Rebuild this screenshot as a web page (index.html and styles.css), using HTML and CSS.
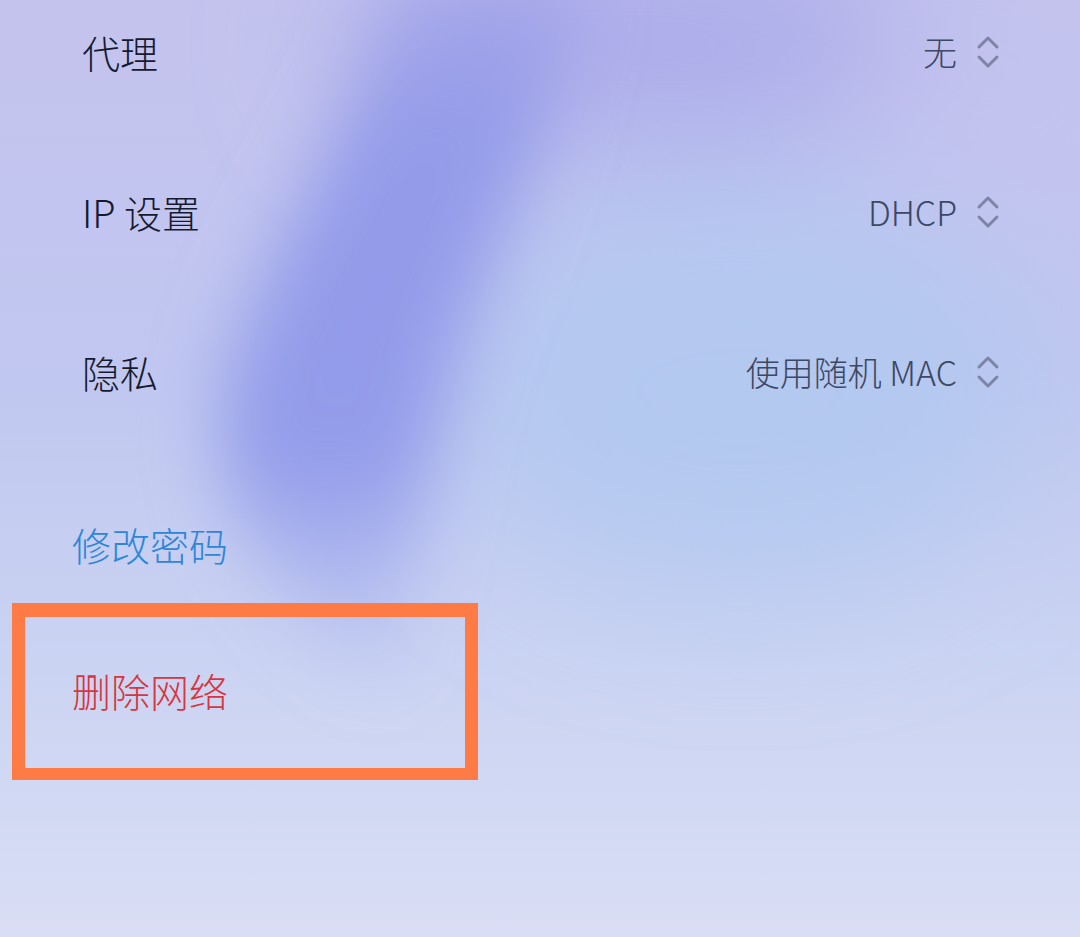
FILE: index.html
```html
<!DOCTYPE html>
<html lang="zh-CN">
<head>
<meta charset="utf-8">
<title>网络设置</title>
<link rel="stylesheet" href="styles.css">
</head>
<body>
<div class="page">
  <div class="settings">
    <div class="row">
      <span class="label">代理</span>
      <span class="value">无<svg class="updown" viewBox="0 0 24 36" width="24" height="36"><path d="M3 13 L12 4 L21 13 M3 23 L12 32 L21 23" fill="none" stroke="#7d84a8" stroke-width="3" stroke-linecap="round" stroke-linejoin="round"/></svg></span>
    </div>
    <div class="row">
      <span class="label">IP 设置</span>
      <span class="value">DHCP<svg class="updown" viewBox="0 0 24 36" width="24" height="36"><path d="M3 13 L12 4 L21 13 M3 23 L12 32 L21 23" fill="none" stroke="#7d84a8" stroke-width="3" stroke-linecap="round" stroke-linejoin="round"/></svg></span>
    </div>
    <div class="row">
      <span class="label">隐私</span>
      <span class="value">使用随机 MAC<svg class="updown" viewBox="0 0 24 36" width="24" height="36"><path d="M3 13 L12 4 L21 13 M3 23 L12 32 L21 23" fill="none" stroke="#7d84a8" stroke-width="3" stroke-linecap="round" stroke-linejoin="round"/></svg></span>
    </div>
  </div>
  <div class="actions">
    <div class="action action-blue">修改密码</div>
    <div class="highlight">
      <div class="action action-red">删除网络</div>
    </div>
  </div>
</div>
</body>
</html>
```

FILE: styles.css
```css
html, body {
  margin: 0;
  padding: 0;
}
body {
  width: 1080px;
  height: 937px;
  overflow: hidden;
  font-family: "Noto Sans CJK SC", "Noto Sans", sans-serif;
  background-color: #c8cdf0;
  background-repeat: no-repeat;
  background-image: url("data:image/svg+xml;utf8,<svg xmlns='http://www.w3.org/2000/svg' width='1080' height='937' viewBox='0 0 1080 937'><defs><linearGradient id='g' x1='0' y1='0' x2='0' y2='1'><stop offset='0' stop-color='%23c4c3ee'/><stop offset='0.4' stop-color='%23c0c7f0'/><stop offset='0.7' stop-color='%23cad3f2'/><stop offset='1' stop-color='%23d9def5'/></linearGradient><linearGradient id='v' x1='0' y1='0' x2='0' y2='1'><stop offset='0' stop-color='%23999de8' stop-opacity='0.5'/><stop offset='0.2' stop-color='%23949be9' stop-opacity='1'/><stop offset='0.66' stop-color='%23939cea' stop-opacity='1'/><stop offset='1' stop-color='%23a0aaee' stop-opacity='0'/></linearGradient><filter id='b' x='-50%25' y='-50%25' width='200%25' height='200%25'><feGaussianBlur stdDeviation='70'/></filter><filter id='s' x='-50%25' y='-50%25' width='200%25' height='200%25'><feGaussianBlur stdDeviation='36'/></filter></defs><rect width='1080' height='937' fill='url(%23g)'/><g filter='url(%23b)'><ellipse cx='740' cy='390' rx='290' ry='200' fill='%23b0c9f0' fill-opacity='0.8'/><ellipse cx='640' cy='40' rx='300' ry='100' fill='%23a8a8ea' fill-opacity='0.9'/><ellipse cx='1010' cy='80' rx='140' ry='90' fill='%23c3c3ef'/></g><g filter='url(%23s)'><path d='M400 -20 L580 -20 C555 110 515 200 480 290 C445 380 420 490 395 700 C320 650 230 560 220 440 C225 300 340 170 400 -20 Z' fill='url(%23v)'/></g></svg>");
}
.page {
  display: flex;
  flex-direction: column;
  padding-top: 14px;
}
.settings {
  display: flex;
  flex-direction: column;
  gap: 80px;
}
.row {
  height: 80px;
  box-sizing: border-box;
  padding: 0 80px 5px 82px;
  display: flex;
  align-items: center;
  justify-content: space-between;
}
.label {
  font-size: 38px;
  color: #161a2e;
  font-weight: 300;
}
.value {
  display: flex;
  align-items: center;
  font-size: 34px;
  font-weight: 300;
  color: #3e4763;
}
.updown {
  margin-left: 19px;
  display: block;
}
.actions {
  display: flex;
  flex-direction: column;
  margin-top: 92px;
}
.action {
  height: 80px;
  box-sizing: border-box;
  padding: 0 0 5px 72px;
  display: flex;
  align-items: center;
  font-size: 39px;
  font-weight: 300;
}
.action-blue {
  color: #2d86d8;
}
.highlight {
  margin: 17px 0 0 12px;
  width: 440px;
  height: 151px;
  border: 13px solid #ff7b45;
  border-top-width: 14px;
  border-bottom-width: 12px;
  display: flex;
  align-items: center;
}
.highlight .action {
  padding-left: 47px;
}
.action-red {
  color: #d8353f;
}
```
